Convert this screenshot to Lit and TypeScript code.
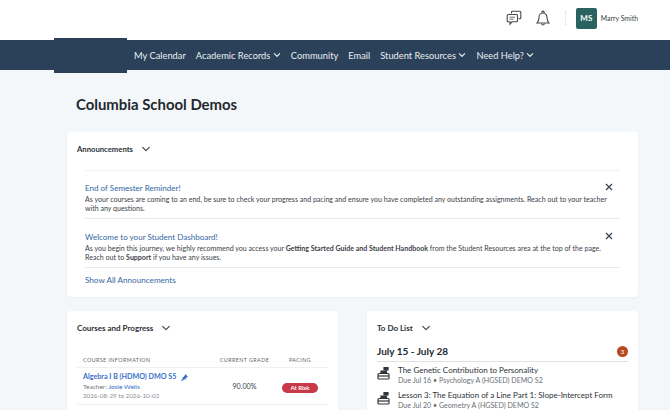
import { LitElement, html, css, svg } from 'lit';
import { customElement } from 'lit/decorators.js';

const chevron = (size: number, weight: number) => html`
  <svg class="chev" width=${size} height=${size} viewBox="0 0 12 12" fill="none" stroke="currentColor"
    stroke-width=${weight} stroke-linecap="round" stroke-linejoin="round">
    <path d="M2 4l4 4 4-4"></path>
  </svg>`;

const closeIcon = html`
  <svg width="8" height="8" viewBox="0 0 8 8" fill="none" stroke="#3a4652" stroke-width="1.3">
    <path d="M1 1l6 6M7 1L1 7"></path>
  </svg>`;

const taskIcon = svg`
  <svg class="task-icon" width="13" height="13" viewBox="0 0 13 13" fill="none" stroke="#30353b" stroke-width="1.2">
    <rect x="1" y="6.500" width="11" height="5.500" rx="1"></rect>
    <path d="M1 9h11"></path>
    <path d="M7 .5h4v2.500H7z" fill="#30353b"></path>
    <path d="M4 6.500V4h5.500v2.500" fill="#30353b"></path>
  </svg>`;

@customElement('app-root')
export class AppRoot extends LitElement {
  static styles = css`
    :host {
      display: block;
      width: 670px;
      height: 415px;
      background: #fff;
      font-family: Lato, 'Open Sans', sans-serif;
      color: #2c3138;
    }

    .page {
      height: 410px;
      overflow: hidden;
      background: #f4f7fa;
    }

    .topbar {
      height: 40px;
      background: #fff;
      display: flex;
      align-items: center;
      justify-content: flex-end;
      padding: 0 32px 4px 0;
      box-sizing: border-box;
    }

    .topbar svg { display: block; }
    .chat { margin-right: 14px; }
    .bell { margin-right: 15px; }

    .divider {
      width: 0;
      height: 14px;
      border-left: 1px dotted #d5d9dd;
      margin-right: 10px;
    }

    .avatar {
      width: 21px;
      height: 21px;
      border-radius: 2px;
      background: #2a6161;
      color: #fff;
      font-size: 8px;
      font-weight: 700;
      display: flex;
      align-items: center;
      justify-content: center;
      margin-right: 4px;
    }

    .user { font-size: 6.9px; color: #3b4148; white-space: nowrap; }

    .nav {
      height: 30px;
      background: #2b4159;
      color: #e9eef2;
      display: flex;
      align-items: center;
      padding-left: 134px;
      gap: 10px;
      font-size: 9.3px;
      position: relative;
    }

    .nav-item { display: flex; align-items: center; gap: 2.5px; white-space: nowrap; }

    .logo-tab {
      position: absolute;
      left: 54px;
      top: -2px;
      width: 73px;
      height: 35px;
      background: #2b4159;
    }

    main { padding: 24px 32px 0 67px; }

    h1 {
      margin: 0 0 18px 9px;
      font-size: 14.9px;
      line-height: 20px;
      font-weight: 700;
      color: #23282e;
    }

    .card {
      background: #fff;
      border-radius: 4px;
      box-shadow: 0 1px 2px rgba(40, 60, 80, 0.05);
    }

    .announcements {
      padding: 9px 10px 0;
      height: 165px;
      box-sizing: border-box;
      margin-bottom: 14px;
    }

    .card-head {
      display: flex;
      align-items: center;
      gap: 8px;
      font-size: 8px;
      font-weight: 700;
      line-height: 16px;
      color: #2c3138;
    }

    .announcements .card-head { font-size: 7.7px; }
    .card-head .chev { color: #3a4652; }

    .notice-list {
      margin: 13px 8px 0;
      border-top: 1px solid #f0f2f4;
    }

    .notice {
      position: relative;
      height: 48px;
      box-sizing: border-box;
      padding-top: 11px;
      border-bottom: 1px solid #e8ebee;
    }

    .notice + .notice { margin-top: 1px; }

    .notice-title { font-size: 8.05px; line-height: 13px; color: #35689f; }

    .notice p {
      margin: 0;
      font-size: 7.05px;
      line-height: 9px;
      color: #3b4148;
      white-space: nowrap;
    }

    .notice svg { position: absolute; right: 7px; top: 12px; }

    .show-all { margin-left: 8px; font-size: 8.15px; line-height: 24px; color: #35689f; }

    .columns { display: flex; gap: 29px; }
    .columns .card { flex: 1; height: 110px; padding: 9px 10px 0; box-sizing: border-box; }

    table {
      width: 100%;
      table-layout: fixed;
      border-collapse: collapse;
      margin-top: 20px;
    }

    th {
      font-size: 5.4px;
      line-height: 8px;
      font-weight: 400;
      letter-spacing: 0.4px;
      color: #5f666d;
      text-align: left;
      padding: 0 0 3px 6px;
      border-bottom: 1px solid #eef0f2;
      white-space: nowrap;
    }

    th.mid, td.mid { text-align: center; padding-left: 0; }
    .col-grade { width: 55px; }
    .col-pacing { width: 56px; }
    td { padding: 4px 0 4px 6px; border-bottom: 1px solid #eef0f2; }

    .course {
      font-size: 7.15px;
      line-height: 10px;
      font-weight: 700;
      color: #3570c8;
      display: flex;
      align-items: center;
      gap: 5px;
      white-space: nowrap;
    }

    .teacher { font-size: 6.5px; line-height: 9px; color: #71777d; }
    .teacher span { color: #3570c8; }
    .dates { font-size: 6.25px; line-height: 9px; color: #8b9096; white-space: nowrap; }
    .grade { font-size: 7.2px; color: #3b4148; }

    .pill {
      display: inline-block;
      width: 36px;
      line-height: 10px;
      border-radius: 5px;
      background: #c93848;
      color: #fff;
      font-size: 6px;
      font-weight: 700;
      vertical-align: middle;
    }

    .range {
      display: flex;
      align-items: center;
      justify-content: space-between;
      margin-top: 7px;
      padding-bottom: 2px;
      border-bottom: 1px solid #dfe2e5;
      font-size: 10px;
      line-height: 16px;
      font-weight: 700;
      color: #23282e;
    }

    .badge {
      width: 11px;
      height: 11px;
      border-radius: 50%;
      background: #b8481e;
      color: #fff;
      font-size: 6px;
      font-weight: 400;
      line-height: 11px;
      text-align: center;
    }

    .task { display: flex; gap: 8px; margin-top: 3px; }
    .task + .task { margin-top: 5px; }
    .task-icon { margin-top: 2px; flex: none; }
    .task-title { font-size: 8px; line-height: 11px; color: #2c3138; white-space: nowrap; }
    .task-meta { font-size: 7.1px; line-height: 9px; color: #6a7076; white-space: nowrap; }
  `;

  render() {
    return html`
      <div class="page">
        <div class="topbar">
          <svg class="chat" width="16" height="16" viewBox="0 0 16 16" fill="none" stroke="#444a50" stroke-width="1.1">
            <path d="M5.500 3.500V2.200c0-.6.4-1 1-1h7.300c.6 0 1 .4 1 1v5.600c0 .6-.4 1-1 1h-1.300"></path>
            <path d="M2.200 4.500h8.300c.6 0 1 .4 1 1v5.300c0 .6-.4 1-1 1H6l-2 2.400v-2.400H2.200c-.6 0-1-.4-1-1V5.500c0-.6.4-1 1-1z"></path>
            <path d="M3.500 7.200h5.500M3.500 9.200h4" stroke-width=".8"></path>
          </svg>
          <svg class="bell" width="14" height="16" viewBox="0 0 14 16" fill="none" stroke="#444a50" stroke-width="1.1">
            <path d="M1 13h12c-1.300-1.500-2-2.700-2-5.500C11 5 9.500 3 7 3S3 5 3 7.500C3 10.300 2.300 11.500 1 13z"></path>
            <path d="M6 3V1.800c0-.5.4-.8 1-.8s1 .3 1 .8V3M5.500 13.500c.2 1 .8 1.500 1.500 1.500s1.300-.5 1.500-1.500"></path>
          </svg>
          <div class="divider"></div>
          <div class="avatar">MS</div>
          <div class="user">Marry Smith</div>
        </div>

        <nav class="nav">
          <div class="logo-tab"></div>
          <div class="nav-item">My Calendar</div>
          <div class="nav-item">Academic Records ${chevron(8, 1.8)}</div>
          <div class="nav-item">Community</div>
          <div class="nav-item">Email</div>
          <div class="nav-item">Student Resources ${chevron(8, 1.8)}</div>
          <div class="nav-item">Need Help? ${chevron(8, 1.8)}</div>
        </nav>

        <main>
          <h1>Columbia School Demos</h1>

          <section class="card announcements">
            <div class="card-head">Announcements ${chevron(10, 1.4)}</div>
            <div class="notice-list">
              <div class="notice">
                <div class="notice-title">End of Semester Reminder!</div>
                <p>As your courses are coming to an end, be sure to check your progress and pacing and ensure you have completed any outstanding assignments. Reach out to your teacher</p>
                <p>with any questions.</p>
                ${closeIcon}
              </div>
              <div class="notice">
                <div class="notice-title">Welcome to your Student Dashboard!</div>
                <p>As you begin this journey, we highly recommend you access your <b>Getting Started Guide and Student Handbook</b> from the Student Resources area at the top of the page.</p>
                <p>Reach out to <b>Support</b> if you have any issues.</p>
                ${closeIcon}
              </div>
            </div>
            <div class="show-all">Show All Announcements</div>
          </section>

          <div class="columns">
            <section class="card">
              <div class="card-head">Courses and Progress ${chevron(10, 1.4)}</div>
              <table>
                <tr>
                  <th>COURSE INFORMATION</th>
                  <th class="mid col-grade">CURRENT GRADE</th>
                  <th class="mid col-pacing">PACING</th>
                </tr>
                <tr>
                  <td>
                    <div class="course">Algebra I B (HDMO) DMO S5
                      <svg width="7" height="7" viewBox="0 0 8 8" fill="#3570c8"><path d="M5 0l3 3-1 .4-1.600 1.700-.1 1.700-1-1L1 8l-1 0 2.300-3.400-1-1 1.700-.1L4.600 1z"></path></svg>
                    </div>
                    <div class="teacher">Teacher: <span>Josie Wells</span></div>
                    <div class="dates">2026-08-29 to 2026-10-02</div>
                  </td>
                  <td class="mid grade">90.00%</td>
                  <td class="mid"><span class="pill">At Risk</span></td>
                </tr>
              </table>
            </section>

            <section class="card">
              <div class="card-head">To Do List ${chevron(10, 1.4)}</div>
              <div class="range">July 15 - July 28 <span class="badge">3</span></div>
              <div class="task">
                ${taskIcon}
                <div>
                  <div class="task-title">The Genetic Contribution to Personality</div>
                  <div class="task-meta">Due Jul 16 • Psychology A (HGSED) DEMO S2</div>
                </div>
              </div>
              <div class="task">
                ${taskIcon}
                <div>
                  <div class="task-title">Lesson 3: The Equation of a Line Part 1: Slope-Intercept Form</div>
                  <div class="task-meta">Due Jul 20 • Geometry A (HGSED) DEMO S2</div>
                </div>
              </div>
            </section>
          </div>
        </main>
      </div>
    `;
  }
}
